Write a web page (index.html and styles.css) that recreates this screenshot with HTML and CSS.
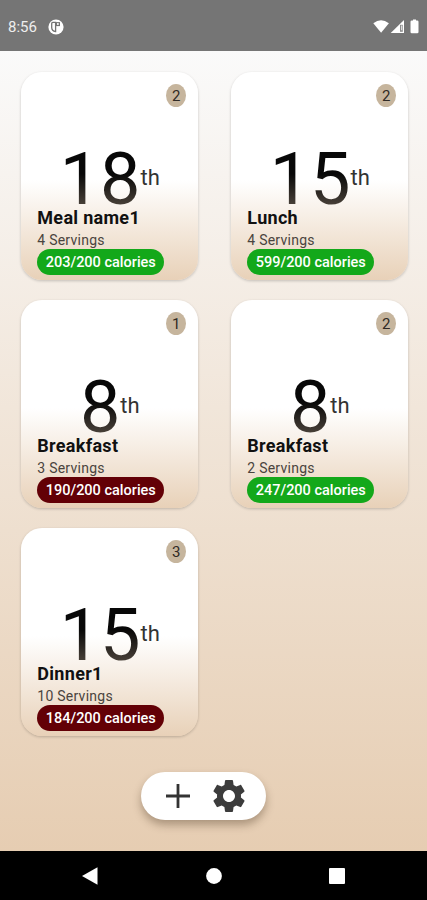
FILE: index.html
```html
<!DOCTYPE html>
<html lang="en">
<head>
    <meta charset="UTF-8">
    <meta name="viewport" content="width=device-width, initial-scale=1.0">
    <title>Meals</title>
    <link rel="stylesheet" href="styles.css">
</head>
<body>
    <header class="status-bar">
        <span class="clock">8:56</span>
        <svg class="app-icon" width="16" height="16" viewBox="0 0 16 16">
            <circle cx="8" cy="8" r="7.6" fill="#fff"/>
            <path d="M7.6 3.3v9.2Q3.7 12 3.7 8.5V4.4q0-1.1 1.1-1.1z" fill="#fff" stroke="#747474" stroke-width="1.3"/>
            <path d="M8 3.1h4v4H8z" fill="#747474"/>
            <circle cx="9.9" cy="5.1" r="1" fill="#fff"/>
        </svg>
        <svg class="system-icons" width="48" height="16" viewBox="0 0 48 16">
            <path d="M.3 4.2Q8 -1.8 15.9 4.2L8.1 13.8z" fill="#fff"/>
            <path d="M31 1v13H17.7z" fill="#fff"/>
            <path d="M27 5.8h2.8v7H27z" fill="#8c8c8c"/>
            <path d="M28.3 6.4h.8v4.8h-.8z" fill="#fff"/>
            <path d="M40 1.5V.6h3v.9h1.2q1.3 0 1.3 1.3v10.1q0 1.3-1.3 1.3h-5.4q-1.3 0-1.3-1.3V2.8q0-1.3 1.3-1.3z" fill="#fff"/>
        </svg>
    </header>

    <main class="content">
        <div class="meal-grid">
            <article class="card">
                <span class="badge">2</span>
                <div class="date"><span class="day">18</span><span class="suffix">th</span></div>
                <h2>Meal name1</h2>
                <p class="servings">4 Servings</p>
                <span class="calories">203/200 calories</span>
            </article>
            <article class="card">
                <span class="badge">2</span>
                <div class="date"><span class="day">15</span><span class="suffix">th</span></div>
                <h2>Lunch</h2>
                <p class="servings">4 Servings</p>
                <span class="calories">599/200 calories</span>
            </article>
            <article class="card">
                <span class="badge">1</span>
                <div class="date"><span class="day">8</span><span class="suffix">th</span></div>
                <h2>Breakfast</h2>
                <p class="servings">3 Servings</p>
                <span class="calories under">190/200 calories</span>
            </article>
            <article class="card">
                <span class="badge">2</span>
                <div class="date"><span class="day">8</span><span class="suffix">th</span></div>
                <h2>Breakfast</h2>
                <p class="servings">2 Servings</p>
                <span class="calories">247/200 calories</span>
            </article>
            <article class="card">
                <span class="badge">3</span>
                <div class="date"><span class="day">15</span><span class="suffix">th</span></div>
                <h2>Dinner1</h2>
                <p class="servings">10 Servings</p>
                <span class="calories under">184/200 calories</span>
            </article>
        </div>

        <div class="toolbar">
            <button type="button" aria-label="Add meal">
                <svg width="24" height="24" viewBox="0 0 24 24">
                    <path d="M12 0v24M0 12h24" stroke="#333" stroke-width="2.8"/>
                </svg>
            </button>
            <button type="button" aria-label="Settings">
                <svg width="40" height="40" viewBox="0 0 24 24">
                    <path fill="#3c3c3c" d="M19.14 12.94c.04-.3.06-.61.06-.94 0-.32-.02-.64-.07-.94l2.03-1.58c.18-.14.23-.41.12-.61l-1.92-3.32c-.12-.22-.37-.29-.59-.22l-2.39.96c-.5-.38-1.03-.7-1.62-.94l-.36-2.54c-.04-.24-.24-.41-.48-.41h-3.84c-.24 0-.43.17-.47.41l-.36 2.54c-.59.24-1.13.57-1.62.94l-2.39-.96c-.22-.08-.47 0-.59.22L2.74 8.87c-.12.21-.08.47.12.61l2.03 1.58c-.05.3-.09.63-.09.94s.02.64.07.94l-2.03 1.58c-.18.14-.23.41-.12.61l1.92 3.32c.12.22.37.29.59.22l2.39-.96c.5.38 1.03.7 1.62.94l.36 2.54c.05.24.24.41.48.41h3.84c.24 0 .44-.17.47-.41l.36-2.54c.59-.24 1.13-.56 1.62-.94l2.39.96c.22.08.47 0 .59-.22l1.92-3.32c.12-.22.07-.47-.12-.61l-2.01-1.58zM12 15.6c-1.98 0-3.6-1.62-3.6-3.6s1.62-3.6 3.6-3.6 3.6 1.62 3.6 3.6-1.62 3.6-3.6 3.6z"/>
                </svg>
            </button>
        </div>
    </main>

    <nav class="nav-bar">
        <svg width="16" height="18" viewBox="0 0 16 18"><path d="M0 9L15.5 .3v17.4z" fill="#fff"/></svg>
        <svg width="16" height="16" viewBox="0 0 16 16"><circle cx="8" cy="8" r="7.9" fill="#fff"/></svg>
        <svg width="16" height="16" viewBox="0 0 16 16"><rect width="16" height="16" rx="1" fill="#fff"/></svg>
    </nav>
</body>
</html>
```

FILE: styles.css
```css
* {
    box-sizing: border-box;
}
body {
    margin: 0;
    height: 900px;
    display: flex;
    flex-direction: column;
    overflow: hidden;
    font-family: Roboto, sans-serif;
    color: #111;
}

/* status bar */
.status-bar {
    height: 51px;
    flex: none;
    display: flex;
    align-items: center;
    padding: 2px 6px 0 8px;
    background: #757575;
    color: #fff;
}
.clock {
    width: 40px;
    font-size: 15px;
    color: #eee;
}
.system-icons {
    margin-left: auto;
}

/* meals */
.content {
    flex: 1;
    display: flex;
    flex-direction: column;
    align-items: center;
    padding-top: 21px;
    background: linear-gradient(#fafafa, #e6cdb2);
}
.meal-grid {
    width: 387px;
    display: grid;
    grid-template-columns: 177px 177px;
    grid-auto-rows: 208px;
    gap: 20px 33px;
    margin-left: 2.6px;
}
.card {
    position: relative;
    padding: 79px 16px 0;
    border-radius: 21px;
    background: linear-gradient(#fff 52%, #e8d1b8);
    box-shadow: 0 1px 3px rgba(0,0,0,0.2);
}
.badge {
    position: absolute;
    top: 12px;
    right: 12px;
    width: 20px;
    height: 23px;
    border-radius: 50%;
    background: #c6b59d;
    color: #2f2a24;
    font-size: 15px;
    line-height: 24px;
    text-align: center;
}
.date {
    height: 57px;
    display: flex;
    justify-content: center;
    line-height: 57px;
}
.day {
    font-size: 72px;
    background: linear-gradient(#080808 40%, #484038 95%);
    -webkit-background-clip: text;
    background-clip: text;
    color: transparent;
}
.suffix {
    font-size: 22px;
    line-height: 54px;
    color: #333;
}
.card h2 {
    margin: 0;
    font-size: 18px;
    font-weight: 700;
    line-height: 20px;
    letter-spacing: 0.3px;
}
.servings {
    margin: 0;
    padding-top: 4px;
    font-size: 14px;
    line-height: 17px;
    letter-spacing: 0.25px;
    color: #4a443e;
}
.calories {
    display: block;
    width: 127px;
    height: 26px;
    border-radius: 13px;
    background: #13a81a;
    color: #fff;
    font-size: 14.5px;
    font-weight: 500;
    line-height: 27px;
    text-align: center;
    white-space: nowrap;
}
.calories.under {
    background: #630006;
}

/* floating toolbar */
.toolbar {
    width: 125px;
    height: 48px;
    display: flex;
    align-items: center;
    justify-content: space-between;
    margin: 36px 0 0 -20px;
    padding: 0 17px 0 25px;
    border-radius: 24px;
    background: #fff;
    box-shadow: 0 5px 9px rgba(60,40,20,0.35);
}
.toolbar button {
    display: flex;
    padding: 0;
    border: none;
    background: none;
}

/* navigation bar */
.nav-bar {
    height: 49px;
    flex: none;
    display: flex;
    align-items: center;
    justify-content: space-between;
    padding: 0 82px 0 82px;
    background: #000;
}
```
